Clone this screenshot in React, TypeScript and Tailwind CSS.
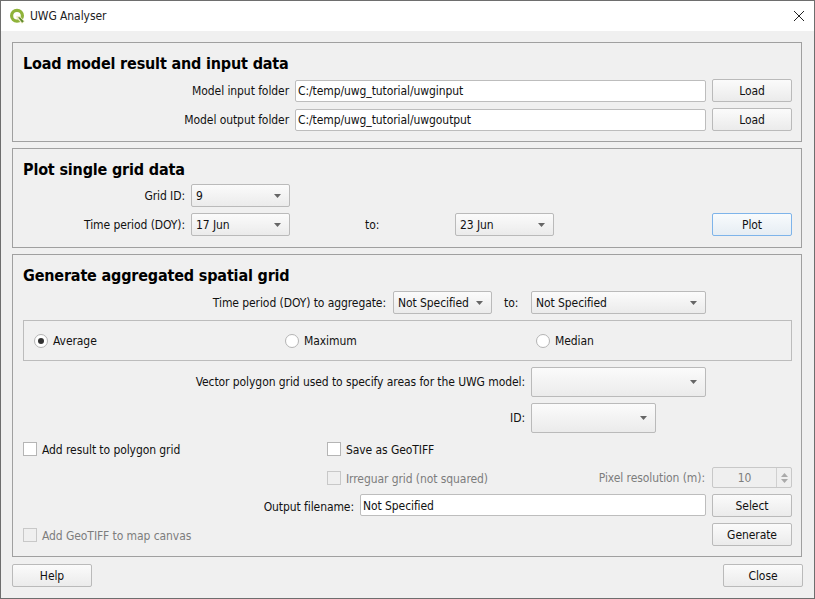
const inputCls = 'flex h-[22px] items-center rounded-[2px] border border-[#bdbdbd] bg-white px-[2px]';
const headingCls = 'mt-[11px] h-[19px] text-[16px] leading-[19px] font-bold tracking-[-0.17px] text-black';

function Button({ label, focused, className = '' }: { label: string; focused?: boolean; className?: string }) {
  return (
    <button
      className={`h-[23px] rounded-[2px] border bg-gradient-to-b text-center ${
        focused ? 'border-[#7eb4ea] from-[#f8fbfd] to-[#e6edf3]' : 'border-[#bababa] from-[#fbfbfb] to-[#ebebeb]'
      } ${className}`}
    >
      {label}
    </button>
  );
}

function Combo({ value = '', className = '' }: { value?: string; className?: string }) {
  return (
    <div
      className={`flex items-center justify-between rounded-[2px] border border-[#bababa] bg-gradient-to-b from-[#fbfbfb] to-[#ebebeb] pl-[4px] pr-[8px] ${className}`}
    >
      <span>{value}</span>
      <svg width="7" height="4" viewBox="0 0 7 4">
        <path d="M0 0h7L3.5 4z" fill="#666" />
      </svg>
    </div>
  );
}

function Radio({ checked }: { checked?: boolean }) {
  return (
    <span className="flex h-[14px] w-[14px] items-center justify-center rounded-full border border-[#b4b4b4] bg-white">
      {checked && <span className="h-[6px] w-[6px] rounded-full bg-[#333]" />}
    </span>
  );
}

function Check({ label, disabled }: { label: string; disabled?: boolean }) {
  return (
    <div className={`flex items-center gap-[5px] ${disabled ? 'text-[#7d7d7d]' : ''}`}>
      <span className={`h-[14px] w-[14px] border ${disabled ? 'border-[#c8c8c8] bg-[#efefef]' : 'border-[#b5b5b5] bg-white'}`} />
      <span className="pt-[2px]">{label}</span>
    </div>
  );
}

function QgisLogo() {
  return (
    <svg width="17" height="17" viewBox="0 0 17 17" fill="none">
      <circle cx="8" cy="7.8" r="5.4" stroke="#8fb33a" strokeWidth="3.2" />
      <path d="M7.4 8h3.4l5 5.2-2.8 2.6-5.6-5.8z" fill="#f0ecc4" />
      <path d="M9 9.2h1.8l4 4.1-1.7 1.5z" fill="#5d8a2e" />
    </svg>
  );
}

export default function App() {
  return (
    <div className="flex h-[599px] w-[815px] flex-col overflow-hidden border border-[#6e6e6e] bg-[#f0f0f0] font-['DejaVu_Sans_Condensed','DejaVu_Sans',sans-serif] text-[12px] leading-[14px] tracking-[-0.08px] text-[#111]">
      {/* title bar */}
      <div className="flex h-[30px] shrink-0 items-center justify-between bg-white pl-[8px] pr-[9px]">
        <div className="flex items-center gap-[4px]">
          <QgisLogo />
          <span className="text-[#222]">UWG Analyser</span>
        </div>
        <svg width="12" height="12" viewBox="0 0 12 12" stroke="#222" strokeWidth="1">
          <path d="M1 1l10 10M11 1L1 11" />
        </svg>
      </div>

      <div className="flex flex-1 flex-col pl-[11px] pr-[12px] pt-[11px]">
        {/* load section */}
        <section className="h-[100px] border border-[#a0a0a0] pl-[10px] pr-[9px]">
          <h2 className={headingCls}>Load model result and input data</h2>
          <div className="mt-[6px] flex flex-col gap-[6px]">
            <div className="flex items-center justify-end gap-[6px]">
              <span>Model input folder</span>
              <div className={`${inputCls} w-[411px]`}>C:/temp/uwg_tutorial/uwginput</div>
              <Button label="Load" className="w-[80px]" />
            </div>
            <div className="flex items-center justify-end gap-[6px]">
              <span>Model output folder</span>
              <div className={`${inputCls} w-[411px]`}>C:/temp/uwg_tutorial/uwgoutput</div>
              <Button label="Load" className="w-[80px]" />
            </div>
          </div>
        </section>

        {/* plot section */}
        <section className="mt-[6px] h-[100px] border border-[#a0a0a0] pl-[10px] pr-[9px]">
          <h2 className={headingCls}>Plot single grid data</h2>
          <div className="mt-[5px] flex h-[23px] items-center">
            <span className="w-[162px] text-right">Grid ID:</span>
            <Combo value="9" className="ml-[6px] h-[23px] w-[99px]" />
          </div>
          <div className="mt-[6px] flex h-[23px] items-center">
            <span className="w-[162px] text-right">Time period (DOY):</span>
            <Combo value="17 Jun" className="ml-[6px] h-[23px] w-[99px]" />
            <span className="ml-[75px] w-[90px]">to:</span>
            <Combo value="23 Jun" className="h-[23px] w-[99px]" />
            <Button label="Plot" focused className="ml-[158px] w-[80px]" />
          </div>
        </section>

        {/* aggregate section */}
        <section className="mt-[6px] h-[303px] border border-[#a0a0a0] pl-[10px] pr-[9px]">
          <h2 className={headingCls}>Generate aggregated spatial grid</h2>
          <div className="mt-[6px] flex h-[23px] items-center justify-end pr-[86px]">
            <span>Time period (DOY) to aggregate:</span>
            <Combo value="Not Specified" className="ml-[7px] h-[23px] w-[99px]" />
            <span className="ml-[12px] w-[27px]">to:</span>
            <Combo value="Not Specified" className="h-[23px] w-[175px]" />
          </div>

          <div className="mt-[6px] flex h-[41px] items-center border border-[#bcbcbc] pl-[10px]">
            <div className="flex w-[251px] items-center gap-[5px]"><Radio checked /><span>Average</span></div>
            <div className="flex w-[251px] items-center gap-[5px]"><Radio /><span>Maximum</span></div>
            <div className="flex items-center gap-[5px]"><Radio /><span>Median</span></div>
          </div>

          <div className="mt-[6px] flex h-[30px] items-center justify-end pr-[86px]">
            <span>Vector polygon grid used to specify areas for the UWG model:</span>
            <Combo className="ml-[6px] h-[30px] w-[175px]" />
          </div>
          <div className="mt-[6px] flex h-[30px] items-center justify-end pr-[136px]">
            <span>ID:</span>
            <Combo className="ml-[6px] h-[30px] w-[125px]" />
          </div>

          <div className="mt-[9px] flex h-[14px] items-center">
            <div className="w-[304px]"><Check label="Add result to polygon grid" /></div>
            <Check label="Save as GeoTIFF" />
          </div>

          <div className="mt-[11px] flex h-[21px] items-center">
            <div className="ml-[304px] flex-1"><Check label="Irreguar grid (not squared)" disabled /></div>
            <span className="text-[#7d7d7d]">Pixel resolution (m):</span>
            <div className="ml-[7px] flex h-[21px] w-[80px] items-center rounded-[2px] border border-[#c8c8c8] bg-[#efefef] text-[#7d7d7d]">
              <span className="flex-1 text-center">10</span>
              <div className="flex h-full w-[15px] flex-col items-center justify-center gap-[2px] border-l border-[#d0d0d0]">
                <svg width="7" height="4" viewBox="0 0 7 4"><path d="M0 4h7L3.5 0z" fill="#aaa" /></svg>
                <svg width="7" height="4" viewBox="0 0 7 4"><path d="M0 0h7L3.5 4z" fill="#aaa" /></svg>
              </div>
            </div>
          </div>

          <div className="mt-[6px] flex h-[23px] items-start justify-end gap-[6px]">
            <span className="mt-[6px]">Output filename:</span>
            <div className={`${inputCls} w-[346px] pt-[2px]`}>Not Specified</div>
            <Button label="Select" className="w-[80px]" />
          </div>

          <div className="mt-[6px] flex h-[23px] items-center justify-between">
            <Check label="Add GeoTIFF to map canvas" disabled />
            <Button label="Generate" className="w-[80px]" />
          </div>
        </section>

        {/* footer */}
        <div className="mt-[7px] -mr-[1px] flex justify-between">
          <Button label="Help" className="w-[80px]" />
          <Button label="Close" className="w-[80px]" />
        </div>
      </div>
    </div>
  );
}
